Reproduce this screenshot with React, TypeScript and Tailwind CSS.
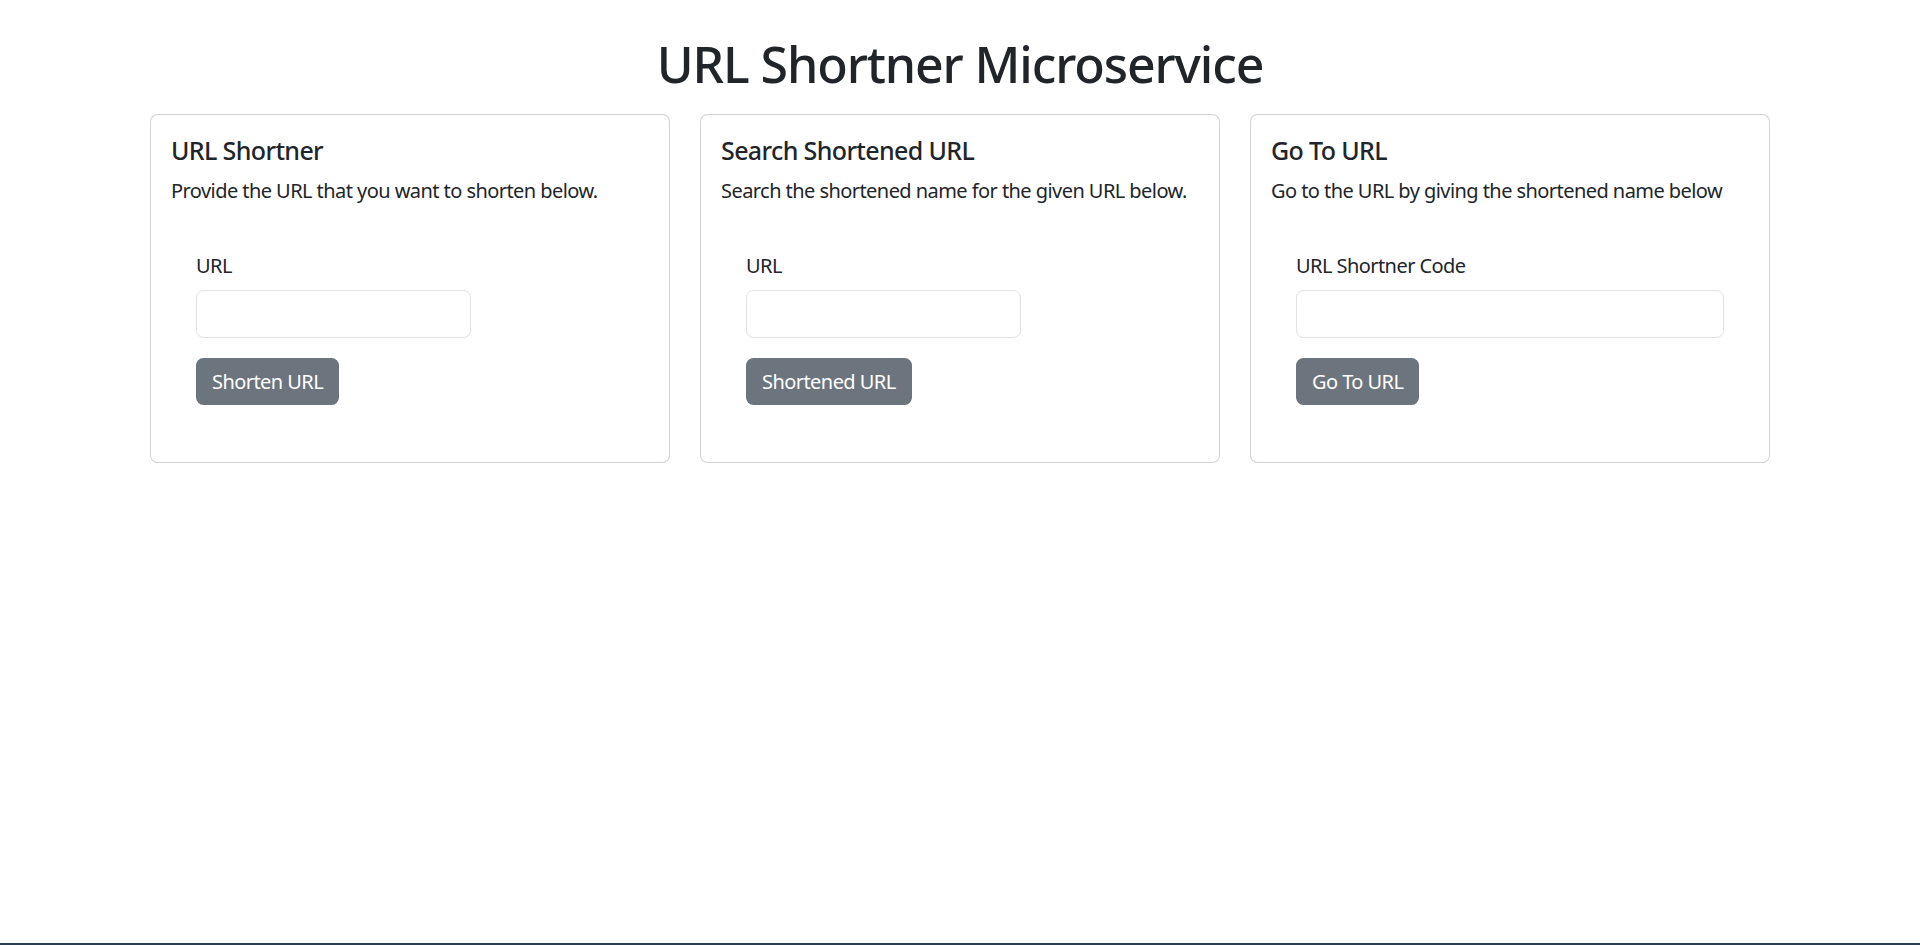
import React from "react";

const font = { fontFamily: '"Noto Sans", "Open Sans", "Liberation Sans", sans-serif' };

function Card({
  title,
  text,
  label,
  button,
  inputClass,
}: {
  title: string;
  text: string;
  label: string;
  button: string;
  inputClass: string;
}) {
  return (
    <div className="h-[349px] rounded-[7.5px] border border-black/[0.175] bg-white p-[20px]">
      <h5 className="mb-[11px] text-[25px] font-medium leading-[30px] tracking-[-0.025em]">{title}</h5>
      <p className="mb-[19px] whitespace-nowrap text-[20px] leading-[30px] tracking-[-0.028em]">{text}</p>
      <form className="px-[25px] pt-[26px]" onSubmit={(e) => e.preventDefault()}>
        <label className="mb-[9px] block text-[20px] leading-[30px] tracking-[-0.028em]">{label}</label>
        <input
          type="text"
          className={`block h-[48px] rounded-[7.5px] border border-[#dee2e6] bg-white px-[15px] text-[20px] outline-none ${inputClass}`}
        />
        <button
          type="submit"
          className="mt-[20px] h-[47px] rounded-[7.5px] bg-[#6c757d] px-[16px] pt-[1px] text-[20px] leading-[30px] tracking-[-0.028em] text-white"
        >
          {button}
        </button>
      </form>
    </div>
  );
}

export default function App() {
  return (
    <div className="flex min-h-[945px] flex-col bg-white text-[#212529]" style={font}>
      <div className="flex-1">
        <h1 className="pt-[34px] text-center text-[50px] font-medium leading-[60px] tracking-[-0.022em]">
          URL Shortner Microservice
        </h1>
        <div className="mx-auto mt-[20px] grid w-[1620px] grid-cols-3 gap-[30px]">
          <Card
            title="URL Shortner"
            text="Provide the URL that you want to shorten below."
            label="URL"
            button="Shorten URL"
            inputClass="w-[275px]"
          />
          <Card
            title="Search Shortened URL"
            text="Search the shortened name for the given URL below."
            label="URL"
            button="Shortened URL"
            inputClass="w-[275px]"
          />
          <Card
            title="Go To URL"
            text="Go to the URL by giving the shortened name below"
            label="URL Shortner Code"
            button="Go To URL"
            inputClass="w-full"
          />
        </div>
      </div>
      <div className="h-[2px] bg-[#2b3e52]" />
    </div>
  );
}
